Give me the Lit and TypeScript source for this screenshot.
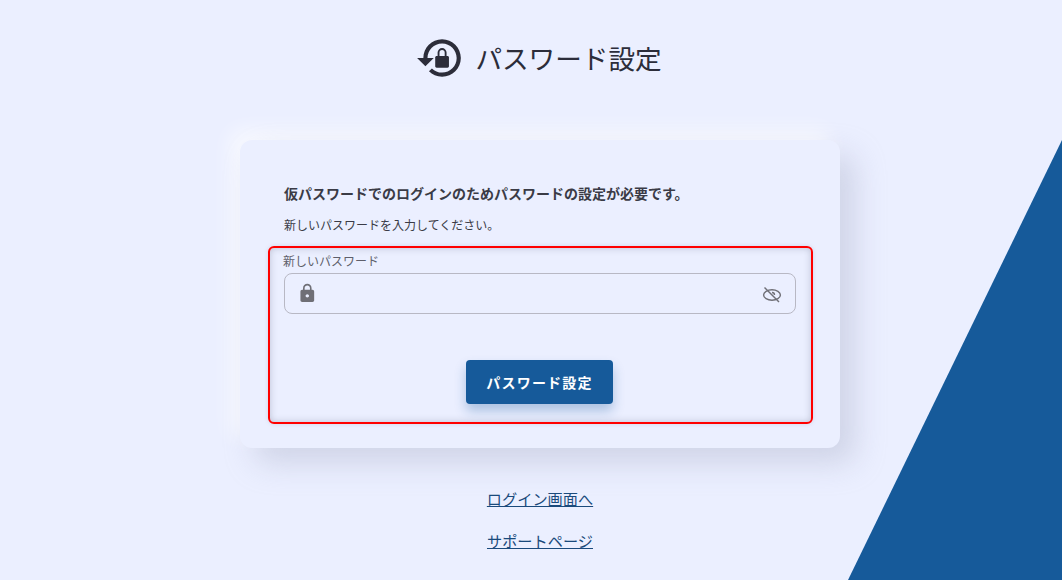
import { LitElement, html, css } from "lit";
import { customElement } from "lit/decorators.js";

@customElement("app-root")
export class AppRoot extends LitElement {
  static override styles = css`
    :host {
      display: block;
      height: 580px;
      overflow: hidden;
      position: relative;
      background: #ebefff;
      font-family: "Noto Sans CJK JP", "Noto Sans", sans-serif;
      color: #3a3b46;
    }
    .wedge {
      position: absolute;
      inset: 0;
      background: #165a9a;
      clip-path: polygon(1062px 140px, 1062px 580px, 848px 580px);
    }
    .page {
      position: relative;
      box-sizing: border-box;
      width: 1080px;
      display: flex;
      flex-direction: column;
      align-items: center;
    }
    .title {
      display: flex;
      align-items: center;
      gap: 10px;
      height: 44px;
      margin: 36px 0 0;
      padding-right: 3px;
      font-size: 26.6px;
      font-weight: 400;
      color: #2c2d3a;
    }
    .title span {
      margin-top: -2px;
    }
    .title svg {
      width: 50px;
      height: 50px;
      fill: #2c2d3a;
    }
    .title .shackle {
      fill: none;
      stroke: #2c2d3a;
      stroke-width: 0.9;
    }
    .card {
      box-sizing: border-box;
      width: 600px;
      height: 308px;
      margin-top: 60px;
      padding: 42px 27px 0 44px;
      background: #ebefff;
      border-radius: 12px;
      box-shadow: 15px 15px 30px rgba(170, 175, 198, 0.42),
        -10px -10px 20px rgba(255, 255, 255, 0.65);
    }
    .lead {
      margin: 0;
      font-size: 14px;
      font-weight: 700;
      line-height: 22px;
    }
    .hint {
      margin: 11px 0 0;
      font-size: 12px;
      line-height: 20px;
    }
    .form {
      box-sizing: border-box;
      width: 545px;
      height: 178px;
      margin: 11px 0 0 -16px;
      padding: 4px 15px 0 14px;
      border: 2px solid #ff0000;
      border-radius: 6px;
      box-shadow: inset 0 0 7px rgba(110, 115, 140, 0.38),
        0 0 4px rgba(110, 115, 140, 0.2);
      display: flex;
      flex-direction: column;
    }
    .label {
      margin-left: -1px;
      font-size: 12px;
      line-height: 18px;
      color: #5e5f6b;
    }
    .field {
      box-sizing: border-box;
      height: 41px;
      margin-top: 3px;
      padding: 0 13px 0 12px;
      border: 1px solid #b8b8c4;
      border-radius: 8px;
      display: flex;
      align-items: center;
      justify-content: space-between;
    }
    .lock {
      width: 20.6px;
      height: 20.6px;
      fill: #6f6f76;
    }
    .eye {
      width: 20px;
      height: 20px;
      fill: none;
      stroke: #6f6f76;
      stroke-width: 1.4;
    }
    .submit {
      align-self: center;
      width: 147px;
      height: 44px;
      margin: 46px 1px 0 0;
      border: 0;
      border-radius: 4px;
      background: #165a9a;
      color: #fff;
      font: 700 14px "Noto Sans CJK JP", "Noto Sans", sans-serif;
      letter-spacing: 1.2px;
      box-shadow: 0 7px 12px rgba(22, 90, 154, 0.3);
    }
    .links {
      display: flex;
      flex-direction: column;
      align-items: center;
      gap: 20px;
      margin-top: 39px;
    }
    .links a {
      font-size: 15.2px;
      line-height: 22px;
      color: #1a4a7c;
      text-decoration: underline;
    }
  `;

  override render() {
    return html`
      <div class="wedge"></div>
      <div class="page">
        <h1 class="title">
          <svg viewBox="0 0 24 24">
            <path d="M13 3c-4.97 0-9 4.03-9 9H1l4 3.99L9 12H6c0-3.87 3.13-7 7-7s7 3.13 7 7-3.13 7-7 7c-1.9 0-3.63-.77-4.88-2.02l-1.42 1.42C8.27 19.99 10.51 21 13 21c4.97 0 9-4.03 9-9s-4.03-9-9-9z" />
            <path d="M10.4 11h5.2c.4 0 .7.3.7.7v4.3c0 .4-.3.7-.7.7h-5.2c-.4 0-.7-.3-.7-.7v-4.3c0-.4.3-.7.7-.7z" />
            <path class="shackle" d="M11.3 11V9.4a1.7 1.7 0 0 1 3.4 0V11" />
          </svg>
          <span>パスワード設定</span>
        </h1>
        <section class="card">
          <p class="lead">仮パスワードでのログインのためパスワードの設定が必要です。</p>
          <p class="hint">新しいパスワードを入力してください。</p>
          <div class="form">
            <div class="label">新しいパスワード</div>
            <div class="field">
              <svg class="lock" viewBox="0 0 24 24">
                <path d="M18 8h-1V6c0-2.76-2.24-5-5-5S7 3.24 7 6v2H6c-1.1 0-2 .9-2 2v10c0 1.1.9 2 2 2h12c1.1 0 2-.9 2-2V10c0-1.1-.9-2-2-2zm-6 9c-1.1 0-2-.9-2-2s.9-2 2-2 2 .9 2 2-.9 2-2 2zm3.1-9H8.9V6c0-1.71 1.39-3.1 3.1-3.1 1.71 0 3.1 1.39 3.1 3.1v2z" />
              </svg>
              <svg class="eye" viewBox="0 0 20 20">
                <ellipse cx="10" cy="11" rx="8.4" ry="5.2" />
                <path d="M2.5 3.5 17 18" />
                <path d="M10 8.5a2.5 2.5 0 0 1 2.5 2.5" />
              </svg>
            </div>
            <button class="submit">パスワード設定</button>
          </div>
        </section>
        <nav class="links">
          <a href="#">ログイン画面へ</a>
          <a href="#">サポートページ</a>
        </nav>
      </div>
    `;
  }
}
